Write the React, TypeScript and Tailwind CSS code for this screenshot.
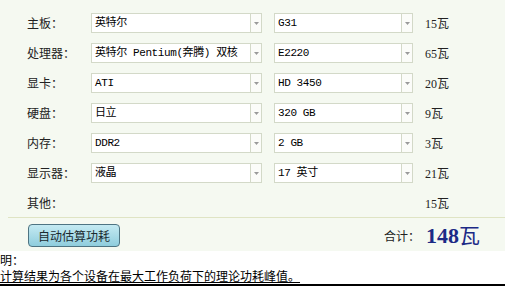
import React from "react";

const rows = [
  { label: "主板：", a: "英特尔", b: "G31", w: "15" },
  { label: "处理器：", a: "英特尔 Pentium(奔腾) 双核", b: "E2220", w: "65" },
  { label: "显卡：", a: "ATI", b: "HD 3450", w: "20" },
  { label: "硬盘：", a: "日立", b: "320 GB", w: "9" },
  { label: "内存：", a: "DDR2", b: "2 GB", w: "3" },
  { label: "显示器：", a: "液晶", b: "17 英寸", w: "21" },
];

const cjk = "font-['SimSun','Noto_Sans_CJK_SC',sans-serif]";
const mono = "font-['Liberation_Mono','Noto_Sans_CJK_SC',monospace]";

function Select({ value, width }: { value: string; width: string }) {
  return (
    <div className={`flex h-[20px] ${width} border border-[#d3d9c8] bg-white`}>
      <div className={`flex-1 flex items-center pl-[3px] text-[11px] text-black ${mono} tracking-[-0.4px] whitespace-nowrap overflow-hidden`}>
        {value}
      </div>
      <div className="w-[11px] flex items-center justify-center border-l border-[#d3d9c8] bg-[#fbfcf9]">
        <svg width="5" height="3" viewBox="0 0 5 3">
          <path d="M0 0h5L2.5 3z" fill="#9a9a9a" />
        </svg>
      </div>
    </div>
  );
}

export default function App() {
  return (
    <div className={`w-[505px] h-[286px] overflow-hidden bg-white ${cjk}`}>
      <div className="bg-[#f5f9f1] pt-[13px]">
        <div className="flex flex-col gap-[10px] pl-[27px]">
          {rows.map((r) => (
            <div key={r.label} className="flex items-center h-[20px]">
              <div className="w-[64px] text-[12px] text-[#222]">{r.label}</div>
              <Select value={r.a} width="w-[171px]" />
              <div className="w-[12px]" />
              <Select value={r.b} width="w-[139px]" />
              <div className="pl-[12px] text-[12px] text-[#222]">
                <span className="font-['Liberation_Serif',serif]">{r.w}</span>瓦
              </div>
            </div>
          ))}
          <div className="flex items-center h-[20px]">
            <div className="w-[398px] text-[12px] text-[#222]">其他：</div>
            <div className="text-[12px] text-[#222]">
              <span className="font-['Liberation_Serif',serif]">15</span>瓦
            </div>
          </div>
        </div>
        <div className="ml-[8px] mt-[4px] h-[1px] bg-[#dfe4c4]" />
        <div className="flex items-start h-[33px] pl-[28px] pr-[25px]">
          <button className="mt-[6px] h-[23px] w-[92px] rounded-[4px] border border-[#4e7482] bg-gradient-to-b from-[#c4eaf2] to-[#8fcddd] text-[12px] text-[#1b2b30]">
            自动估算功耗
          </button>
          <div className="ml-auto mt-[6px] h-[23px] flex items-center gap-[6px]">
            <span className="text-[12px] text-[#222]">合计：</span>
            <span className="font-['Liberation_Serif',serif] font-bold text-[22px] text-[#1c2a86] leading-none">
              148<span className={`${cjk} font-normal text-[21px]`}>瓦</span>
            </span>
          </div>
        </div>
      </div>
      <div className="text-[12px] leading-[16px] text-black">
        <div className="pt-[1px]">明：</div>
        <div className="underline">计算结果为各个设备在最大工作负荷下的理论功耗峰值。</div>
        <div className="h-[2px] bg-black" />
      </div>
    </div>
  );
}
